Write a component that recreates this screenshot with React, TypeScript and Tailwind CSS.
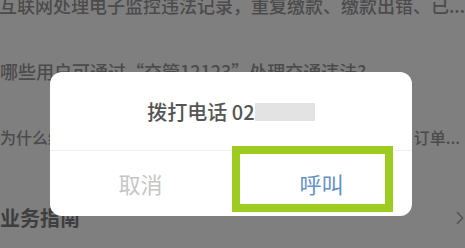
import { ChevronRight } from "lucide-react";

const font = { fontFamily: '"Noto Sans CJK SC", "Noto Sans", sans-serif' };

const App = () => {
  return (
    <div
      className="relative w-[465px] h-[248px] overflow-hidden bg-[#7f7f7f]"
      style={font}
    >
      {/* page behind the mask */}
      <div className="flex flex-col -mt-[28px]">
        <div className="flex h-[66px] items-center -ml-[1px] text-[18px] leading-[18px] font-medium text-[#4b4b4b] whitespace-nowrap">
          互联网处理电子监控违法记录，重复缴款、缴款出错、已...
        </div>
        <div className="flex h-[66px] items-center text-[18px] leading-[18px] font-medium text-[#4b4b4b] whitespace-nowrap">
          哪些用户可通过“交管12123”处理交通违法?
        </div>
        <div className="flex h-[66px] items-center justify-between pr-[5px] text-[16px] leading-[16px] font-medium text-[#4b4b4b] whitespace-nowrap">
          <span>为什么缴款后仍显示未处理</span>
          <span>订单...</span>
        </div>
        <div className="flex h-[96px] items-center justify-between -mr-[6px]">
          <span className="text-[20px] leading-[20px] font-bold text-[#3e3e3e]">
            业务指南
          </span>
          <ChevronRight size={22} strokeWidth={1.5} className="text-[#505050] -mt-[1px]" />
        </div>
      </div>

      {/* call dialog */}
      <div className="absolute left-[50px] top-[72px] w-[362px] h-[144px] rounded-[12px] bg-white flex flex-col">
        <div className="flex h-[78px] items-center justify-center pt-[2px] text-[20px] leading-[20px] font-medium text-[#555555]">
          <span>拨打电话 02</span>
          <span className="inline-block w-[60px] h-[18px] bg-[#e3e3e3]" />
        </div>
        <div className="flex flex-1 border-t border-[#eeeeee]">
          <div className="flex flex-1 items-center justify-center text-[22px] text-[#c6c6c6]">
            取消
          </div>
          <div className="flex flex-1 items-center justify-center text-[22px] text-[#6491c6]">
            呼叫
          </div>
        </div>
      </div>

      {/* highlight frame */}
      <div className="absolute left-[232px] top-[146px] w-[161px] h-[66px] border-[8px] border-[#9dcb1f]" />
    </div>
  );
};

export default App;
